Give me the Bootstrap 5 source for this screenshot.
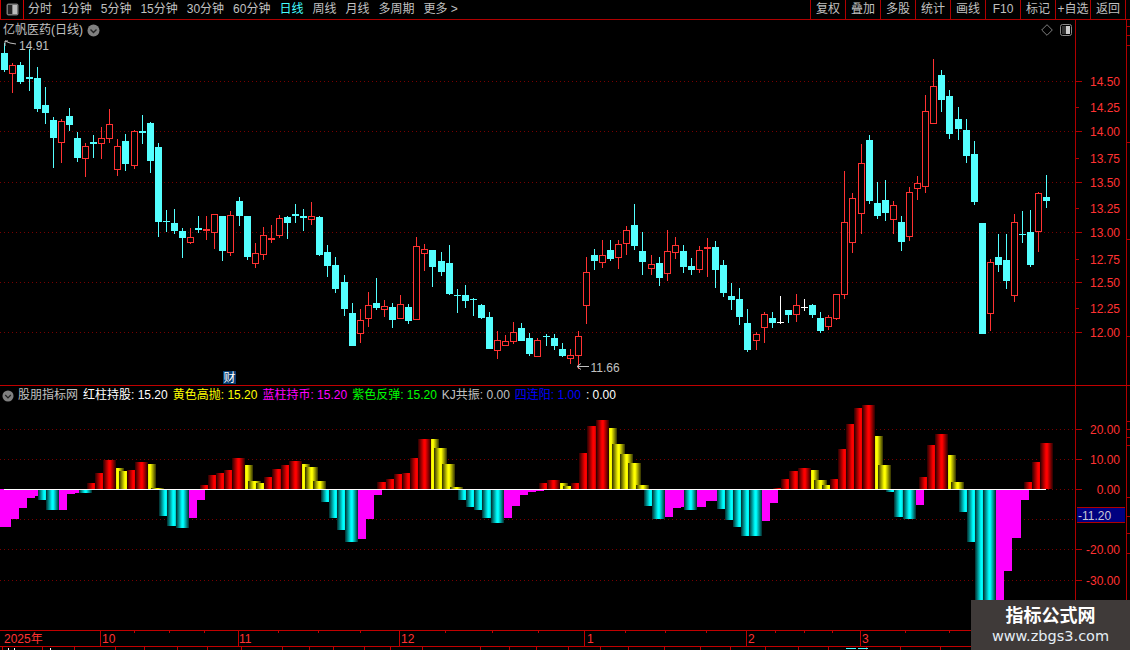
<!doctype html>
<html lang="zh">
<head>
<meta charset="utf-8">
<title>亿帆医药(日线)</title>
<link href="https://cdn.jsdelivr.net/npm/bootstrap@5.3.0/dist/css/bootstrap.min.css" rel="stylesheet">
<style>
html,body{margin:0;background:#000;overflow:hidden}
body,svg text{font-family:"Liberation Sans","Noto Sans CJK SC",sans-serif;font-size:12px}
.stage{width:1130px;height:650px;background:#000;color:#c0c0c0;overflow:hidden}
.topbar{height:20px;border-bottom:1px solid #b00000;line-height:19px}
.winbox{width:24px;height:19px;border-right:1px solid #d00000;border-left:1px solid #d00000}
.periods{padding-left:4px;gap:9px}
.periods .on{color:#4ff}
.tool{width:35px;text-align:center;border-left:1px solid #b00000;white-space:nowrap}
.toolend{width:5px;border-left:1px solid #b00000}
.pane-top{height:366px;border-bottom:1px solid #c00000}
.pane-low{height:244px}
.plot{width:1075px}
.head{height:20px;line-height:19px;padding-left:3px}
.head-low{height:19px;line-height:17px;padding-left:2px;gap:5px;white-space:nowrap}
.head-low svg{margin-right:-1px}
.axis{width:55px;border-left:1px solid #b00000}
.chart{display:block}
.c-w{color:#fff}.c-y{color:#ff0}.c-m{color:#f0f}.c-g{color:#0f0}.c-b{color:#00f}
.stamp{right:0;bottom:0;width:159px;height:50px;background:#3f3a39;color:#fff;line-height:1}
.stamp-a{font-size:18px;font-weight:700;margin-top:7px;letter-spacing:0}
.stamp-b{font-family:"DejaVu Sans",sans-serif;font-size:14.5px;color:#e6eef5;margin-top:4px}
.headicons{gap:7px;padding-right:3px}
</style>
</head>
<body>
<div class="stage position-relative d-flex flex-column">
  <div class="topbar d-flex">
    <div class="winbox d-flex align-items-center justify-content-center">
      <svg width="13" height="13" viewBox="0 0 13 13"><rect x=".5" y=".5" width="12" height="12" rx="2" fill="#777"/><rect x="2" y="2" width="4.5" height="9" fill="#222"/><rect x="6.5" y="2" width="4.5" height="9" fill="#bbb"/></svg>
    </div>
    <div class="periods d-flex">
      <span>分时</span><span>1分钟</span><span>5分钟</span><span>15分钟</span><span>30分钟</span><span>60分钟</span><span class="on">日线</span><span>周线</span><span>月线</span><span>多周期</span><span>更多 &gt;</span>
    </div>
    <div class="d-flex ms-auto">
      <div class="tool">复权</div><div class="tool">叠加</div><div class="tool">多股</div><div class="tool">统计</div><div class="tool">画线</div><div class="tool">F10</div><div class="tool">标记</div><div class="tool">+自选</div><div class="tool">返回</div><div class="toolend"></div>
    </div>
  </div>

  <div class="pane-top d-flex">
    <div class="plot d-flex flex-column">
      <div class="head d-flex align-items-center">
        <span>亿帆医药(日线)</span>
        <svg class="ms-1" width="13" height="13" viewBox="0 0 13 13"><circle cx="6.5" cy="6.5" r="6" fill="#808080"/><path d="M3.5 5.5 6.5 8.5 9.5 5.5" fill="none" stroke="#222" stroke-width="1.4"/></svg>
        <div class="headicons d-flex align-items-center ms-auto">
          <svg width="12" height="12" viewBox="0 0 12 12"><path d="M6 .7 11.3 6 6 11.3 .7 6Z" fill="none" stroke="#808080"/></svg>
          <svg width="12" height="12" viewBox="0 0 12 12"><rect x=".5" y=".5" width="11" height="11" rx="2" fill="none" stroke="#888"/><rect x="6" y="2" width="4" height="8" fill="#ccc"/><rect x="2" y="2" width="4" height="8" fill="#333"/></svg>
        </div>
      </div>
      <svg id="upper" class="chart" width="1075" height="345" viewBox="0 40 1075 345"></svg>
    </div>
    <div class="axis"><svg id="axisU" class="chart" width="54" height="365" viewBox="1076 20 54 365"></svg></div>
  </div>

  <div class="pane-low d-flex">
    <div class="plot d-flex flex-column">
      <div class="head-low d-flex align-items-center">
        <svg width="12" height="12" viewBox="0 0 13 13"><circle cx="6.5" cy="6.5" r="6" fill="#808080"/><path d="M3.5 5.5 6.5 8.5 9.5 5.5" fill="none" stroke="#222" stroke-width="1.4"/></svg>
        <span>股朋指标网</span>
        <span class="c-w">红柱持股: 15.20</span>
        <span class="c-y">黄色高抛: 15.20</span>
        <span class="c-m">蓝柱持币: 15.20</span>
        <span class="c-g">紫色反弹: 15.20</span>
        <span>KJ共振: 0.00</span>
        <span class="c-b">四连阳: 1.00</span>
        <span class="c-w">: 0.00</span>
      </div>
      <svg id="lower" class="chart" width="1075" height="225" viewBox="0 405 1075 225"></svg>
    </div>
    <div class="axis"><svg id="axisL" class="chart" width="54" height="244" viewBox="1076 386 54 244"></svg></div>
  </div>

  <svg id="dates" class="chart" width="1130" height="20" viewBox="0 630 1130 20"></svg>

  <div class="stamp position-absolute text-center">
    <div class="stamp-a">指标公式网</div>
    <div class="stamp-b">www.zbgs3.com</div>
  </div>
</div>

<script>
var CANDLES="c,43,53,69,71;r,63,65,73,92;c,62,65,81,83;c,49,77,79,90;c,67,78,108,111;c,87,105,112,123;c,117,120,137,167;r,119,121,142,162;c,108,116,124,130;c,132,138,157,161;r,143,146,158,176;c,135,142,144,157;r,127,138,143,158;r,109,124,138,142;r,139,146,169,175;c,134,141,163,170;r,130,131,165,168;c,115,131,133,143;c,122,123,160,172;c,143,147,221,236;c,210,221,222,231;c,209,223,230,233;c,228,231,237,257;r,228,237,242,243;c,216,228,230,232;r,216,229,231,239;r,214,214,232,248;c,216,216,250,260;r,211,215,252,255;c,197,201,215,225;c,216,216,256,259;r,243,253,263,267;r,227,235,254,259;r,225,238,240,242;r,215,218,235,237;c,216,217,222,238;c,204,214,216,222;c,209,216,218,230;r,202,216,219,224;c,216,217,254,255;c,245,252,265,276;c,257,265,288,292;c,275,282,308,315;c,303,313,345,345;r,309,320,333,342;r,292,305,318,326;c,278,303,307,309;r,300,306,309,316;c,303,307,319,327;r,295,304,318,318;c,304,307,320,323;r,237,246,319,319;r,244,249,253,270;c,250,250,266,286;c,252,261,271,275;c,245,263,293,294;c,289,295,296,312;c,285,295,300,307;c,298,299,300,315;c,304,305,317,318;c,312,317,348,348;r,331,340,350,358;r,335,341,345,345;r,322,332,341,343;c,323,328,340,340;c,333,338,353,355;r,338,340,356,356;c,334,336,337,345;c,334,338,345,349;c,343,349,355,356;r,349,355,358,363;r,331,336,355,368;r,257,272,305,323;c,249,255,260,269;r,240,255,262,267;c,240,250,258,260;r,240,244,257,268;r,226,230,243,254;c,204,225,245,249;c,232,251,261,274;r,255,264,268,274;c,257,263,277,285;r,230,251,273,280;r,237,245,252,258;c,245,251,266,272;c,258,266,269,274;r,246,250,269,272;r,238,247,249,276;c,241,247,269,287;c,260,265,292,296;c,283,296,299,309;c,288,299,316,324;c,309,323,349,351;r,332,334,340,349;r,312,314,327,342;c,312,318,322,327;w,296,322,323,323;c,310,310,314,322;r,294,305,314,321;w,299,307,308,310;c,304,305,314,317;c,312,318,330,332;r,315,317,326,329;r,294,294,318,319;r,171,222,294,298;r,193,198,242,252;r,144,163,213,233;c,135,140,200,203;c,182,203,215,218;c,180,200,212,220;r,201,205,219,233;c,216,222,241,250;r,187,192,236,240;r,176,183,188,199;r,95,111,186,192;r,59,86,123,123;c,70,75,99,111;c,90,96,133,138;c,107,119,128,139;c,119,130,155,162;c,141,154,201,204;c,223,223,333,333;r,259,262,313,330;c,234,257,264,271;c,234,260,280,288;r,214,222,295,301;c,211,234,235,242;c,210,232,264,266;r,192,193,231,251;c,175,197,200,207".split(";").map(function(s){return s.split(",")});
var HIST="m527 m519 m508 m498 m496 c500 c510 m510 m494 m493 c493 r483 r473 r460 y468 y471 r470 r462 y464 y488 c516 c526 c528 m518 m500 r485 r475 r473 r470 r458 y465 y481 y483 r477 r469 r465 r461 y464 y467 y481 c502 c518 c530 c542 m539 m519 m495 r482 r479 r474 r473 r458 r439 y439 y448 y464 y487 c500 c507 c510 c518 c523 m518 m506 m495 m492 m491 r483 r480 y483 y486 r483 r453 r426 r420 y428 y444 y454 y463 y485 c506 c519 m517 m508 m507 c510 m507 m501 m501 c509 c520 c527 c536 c536 m521 m503 r488 r479 r471 r468 y470 y480 y485 r479 r449 r424 r408 r405 y436 y465 c492 c517 c519 m505 r477 r445 r434 y455 y482 c512 c542 c640 c640 m640 m571 m538 m500 r482 r462 r443".split(" ");
var STEP=8.078,X0=4.3,RED="#ff3232",CYAN="#54ffff",AX="#b00000";
function cx(i){return X0+STEP*i}
function rect(x,y,w,h,f,extra){return '<rect x="'+x+'" y="'+y+'" width="'+w+'" height="'+h+'" fill="'+f+'"'+(extra||"")+'/>'}
function dots(y){return '<line x1="0" x2="1075" y1="'+(y+.5)+'" y2="'+(y+.5)+'" stroke="#780000" stroke-dasharray="1 3"/>'}

/* candles */
var u='<g shape-rendering="crispEdges">';
[81,131,182,232,282,332].forEach(function(y){u+=dots(y)});
CANDLES.forEach(function(d,i){
  var k=d[0],h=+d[1],t=+d[2],b=+d[3],l=+d[4],x=Math.round(cx(i));
  var col=k=="r"?RED:k=="w"?"#fff":CYAN;
  u+=rect(x,h,1,l-h+1,col);
  var bh=Math.max(1,b-t);
  if(k=="r"&&bh>2){u+='<rect x="'+(x-2.5)+'" y="'+(t+.5)+'" width="6" height="'+bh+'" fill="#000" stroke="'+RED+'"/>';}
  else{u+=rect(x-3,t,7,bh+(bh<3?0:1),col);}
});
u+='</g>';
u+='<path d="M5 46V41H8M5 41 10 43 16 44" fill="none" stroke="#c0c0c0"/><text x="19" y="50" fill="#c0c0c0">14.91</text>';
u+='<path d="M589 366.5H577M581 363.5 577 366.5 581 369.5" fill="none" stroke="#c0c0c0"/><text x="590.5" y="372" fill="#c0c0c0">11.66</text>';
u+=rect(223,371,13,13,"#063c72")+'<text x="223.5" y="382" fill="#fff">财</text>';
document.getElementById("upper").innerHTML=u;

/* histogram */
var gd={r:["#260000","#ff0000"],y:["#2e2e00","#ffff00"],c:["#012a2a","#00ffff"]},defs="<defs>";
for(var g in gd){defs+='<linearGradient id="g'+g+'"><stop offset="0" stop-color="'+gd[g][0]+'"/><stop offset=".46" stop-color="'+gd[g][1]+'"/><stop offset=".56" stop-color="'+gd[g][1]+'"/><stop offset="1" stop-color="'+gd[g][0]+'"/></linearGradient>';}
defs+="</defs>";
var lo=defs+'<g shape-rendering="crispEdges">';
[429,459,489,519,549,580].forEach(function(y){lo+=dots(y)});
["y","r","m","c"].forEach(function(layer){
  HIST.forEach(function(v,i){
    var k=v[0],y=+v.slice(1);
    if(k!=layer)return;
    var L=Math.round(cx(i)-6.5),up=(k=="r"||k=="y");
    var top=up?y:489,h=up?489-y:y-489;
    lo+=rect(L,top,13,h,k=="m"?"#ff00ff":"url(#g"+k+")");
  });
});
lo+=rect(4,489,1042,1,"#fff")+'</g>';
document.getElementById("lower").innerHTML=lo;

/* axes */
function label(y,t){return '<text x="1120" y="'+(y+4.5)+'" text-anchor="end" fill="'+RED+'">'+t+'</text>'}
var au='<g shape-rendering="crispEdges">'+rect(1126,20,1,365,AX);
[[81,"14.50",6],[107,"14.25",3],[131,"14.00",6],[158,"13.75",3],[182,"13.50",6],[208,"13.25",3],[232,"13.00",6],[259,"12.75",3],[282,"12.50",6],[308,"12.25",3],[332,"12.00",6]].forEach(function(a){au+=rect(1076,a[0],a[2],1,AX)});
[26,35,45,142,239,336].forEach(function(y){au+=rect(1127,y,3,1,AX)});
au+='</g>';
[[81,"14.50"],[107,"14.25"],[131,"14.00"],[158,"13.75"],[182,"13.50"],[208,"13.25"],[232,"13.00"],[259,"12.75"],[282,"12.50"],[308,"12.25"],[332,"12.00"]].forEach(function(a){au+=label(a[0],a[1])});
document.getElementById("axisU").innerHTML=au;

var al='<g shape-rendering="crispEdges">'+rect(1126,386,1,244,AX);
[429,459,489,549,580].forEach(function(y){al+=rect(1076,y,6,1,AX)});
[421,429,437,445,497,516,533,553,600].forEach(function(y){al+=rect(1127,y,3,1,AX)});
al+=rect(1077,507,48,16,"#000080")+rect(1077,507,48,1,AX)+rect(1077,522,48,1,AX)+'</g>';
[[429,"20.00"],[459,"10.00"],[489,"0.00"],[549,"-20.00"],[580,"-30.00"]].forEach(function(a){al+=label(a[0],a[1])});
al+='<text x="1078" y="519.5" fill="#c8c8d8">-11.20</text>';
document.getElementById("axisL").innerHTML=al;

/* date axis */
var da='<g shape-rendering="crispEdges">'+rect(0,630,1130,1,"#c00000")+rect(0,646,1130,1,"#c00000");
[100,238,399,584,746,860].forEach(function(x){da+=rect(x,630,1,16,"#c00000")});
[134,169,204,278,318,360,445,492,538,625,665,706,775,804,832,905,949].forEach(function(x){da+=rect(x,631,1,2,"#c00000")});
[2,42,74,115,144,177,207,241,282,309,333,364,390,422,480,509,536,568,600,628,664,700,730,765,798,828,866,900,940].forEach(function(x){da+=rect(x,647,1,3,"#c00000")});
da+=rect(8,648,1,2,"#fff")+rect(14,648,1,2,"#fff")+rect(50,648,1,2,"#fff")+rect(846,648,10,1,"#4ff")+rect(858,648,10,1,"#4ff")+'</g>';
[[4,"2025年"],[102,"10"],[239,"11"],[401,"12"],[587,"1"],[748,"2"],[862,"3"]].forEach(function(a){da+='<text x="'+a[0]+'" y="643" fill="'+RED+'">'+a[1]+'</text>'});
document.getElementById("dates").innerHTML=da;
</script>
<script src="https://cdn.jsdelivr.net/npm/bootstrap@5.3.0/dist/js/bootstrap.bundle.min.js"></script>
</body>
</html>
